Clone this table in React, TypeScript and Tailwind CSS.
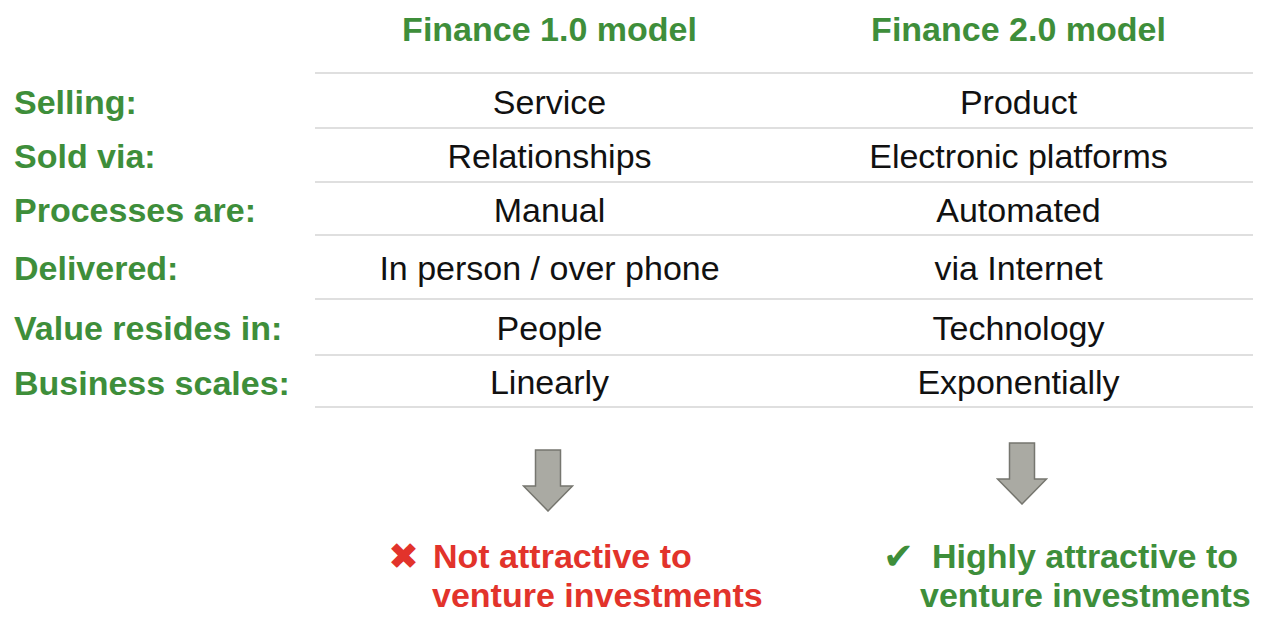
import React from "react";

interface Row {
  label: string;
  oldModel: string;
  newModel: string;
  height: string;
}

const rows: Row[] = [
  { label: "Selling:", oldModel: "Service", newModel: "Product", height: "h-[55px]" },
  { label: "Sold via:", oldModel: "Relationships", newModel: "Electronic platforms", height: "h-[54px]" },
  { label: "Processes are:", oldModel: "Manual", newModel: "Automated", height: "h-[53px]" },
  { label: "Delivered:", oldModel: "In person / over phone", newModel: "via Internet", height: "h-[64px]" },
  { label: "Value resides in:", oldModel: "People", newModel: "Technology", height: "h-[56px]" },
  { label: "Business scales:", oldModel: "Linearly", newModel: "Exponentially", height: "h-[54px]" },
];

const DownArrow = () => (
  <svg width="52" height="63" viewBox="0 0 52 63">
    <polygon
      points="13.5,1 38.5,1 38.5,37 50.5,37 26,62 1.5,37 13.5,37"
      fill="#aaaaa3"
      stroke="#76766f"
      strokeWidth="1.5"
      strokeLinejoin="miter"
    />
  </svg>
);

const App: React.FC = () => {
  return (
    <div
      className="w-[1278px] h-[619px] bg-white overflow-hidden text-[34px] leading-[38px] text-[#111111]"
      style={{ fontFamily: '"Liberation Sans", Arial, sans-serif' }}
    >
      {/* header */}
      <div className="grid grid-cols-[315px_469px_469px] h-[72px]">
        <div />
        <div className="pt-[10px] text-center font-bold text-[#3e8e3a]">Finance 1.0 model</div>
        <div className="pt-[10px] text-center font-bold text-[#3e8e3a]">Finance 2.0 model</div>
      </div>

      {/* comparison table */}
      {rows.map((row, i) => {
        const last = i === rows.length - 1;
        const cell =
          "flex items-center justify-center pt-[2px] border-t-2 border-[#dfdfdf] " +
          (last ? "border-b-2 " : "");
        return (
          <div key={row.label} className={"grid grid-cols-[315px_469px_469px] " + row.height}>
            <div className="flex items-center pl-[14px] pt-[4px] font-bold text-[#3e8e3a] whitespace-nowrap">
              {row.label}
            </div>
            <div className={cell}>{row.oldModel}</div>
            <div className={cell}>{row.newModel}</div>
          </div>
        );
      })}

      {/* arrows */}
      <div className="grid grid-cols-[315px_469px_469px] h-[129px]">
        <div />
        <div className="flex justify-center pt-[41px] pr-[4px]">
          <DownArrow />
        </div>
        <div className="flex justify-center pt-[34px] pl-[6px]">
          <DownArrow />
        </div>
      </div>

      {/* verdicts */}
      <div className="grid grid-cols-[315px_469px_469px] leading-[39px] font-bold">
        <div />
        <div className="pl-[73px] text-[#e2332b]">
          <div className="flex items-center whitespace-nowrap">
            <span
              className="w-[45px] text-[37px] leading-[39px]"
              style={{ fontFamily: '"DejaVu Sans", sans-serif' }}
            >
              ✖
            </span>
            <span>Not attractive to</span>
          </div>
          <div className="pl-[44px] whitespace-nowrap">venture investments</div>
        </div>
        <div className="pl-[99px] text-[#3e8e3a]">
          <div className="flex items-center whitespace-nowrap">
            <span
              className="w-[49px] text-[37px] leading-[39px]"
              style={{ fontFamily: '"DejaVu Sans", sans-serif' }}
            >
              ✔
            </span>
            <span>Highly attractive to</span>
          </div>
          <div className="pl-[37px] whitespace-nowrap">venture investments</div>
        </div>
      </div>
    </div>
  );
};

export default App;
